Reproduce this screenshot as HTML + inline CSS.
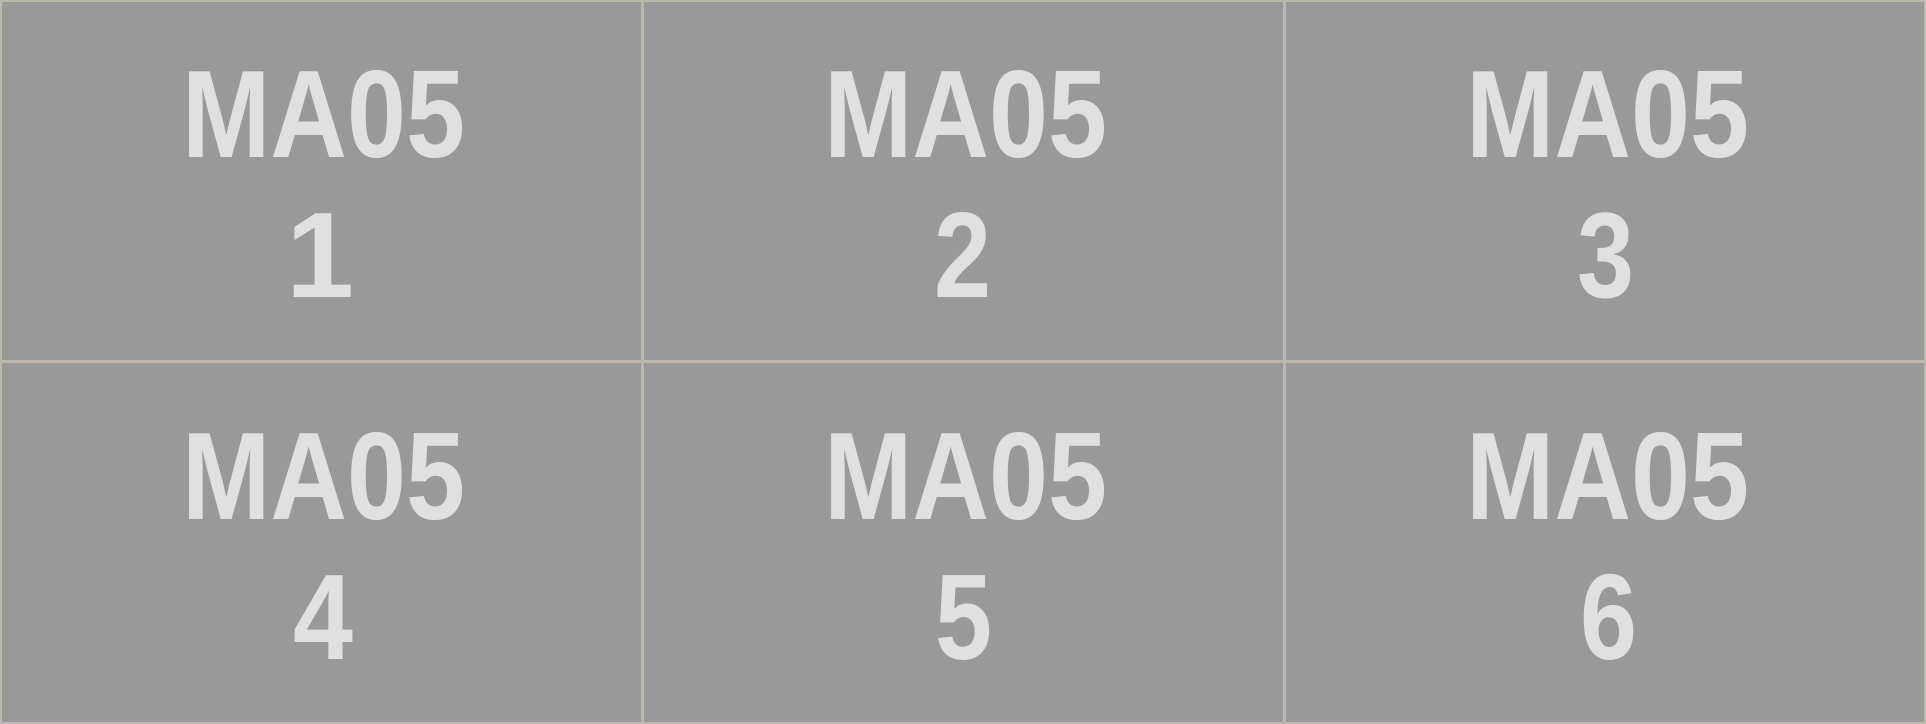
<!DOCTYPE html>
<html><head><meta charset="utf-8"><style>
html,body{margin:0;padding:0;width:1926px;height:724px;overflow:hidden;background:#999;}
svg{position:absolute;left:0;top:0}
text{font-family:"Liberation Sans",sans-serif;font-weight:bold;fill:#e0e0e0;}
</style></head><body>
<svg width="1926" height="724" viewBox="0 0 1926 724">
<rect width="1926" height="724" fill="#999"/>
<g font-size="124">
<text x="182" y="157" textLength="283" lengthAdjust="spacingAndGlyphs">MA05</text>
<text x="824" y="157" textLength="283" lengthAdjust="spacingAndGlyphs">MA05</text>
<text x="1466" y="157" textLength="283" lengthAdjust="spacingAndGlyphs">MA05</text>
<text x="182" y="519" textLength="283" lengthAdjust="spacingAndGlyphs">MA05</text>
<text x="824" y="519" textLength="283" lengthAdjust="spacingAndGlyphs">MA05</text>
<text x="1466" y="519" textLength="283" lengthAdjust="spacingAndGlyphs">MA05</text>
</g>
<g font-size="122" text-anchor="middle">
<text x="320" y="297">1</text>
<text x="934" y="297" text-anchor="start" textLength="57" lengthAdjust="spacingAndGlyphs">2</text>
<text x="1577" y="297" text-anchor="start" textLength="57" lengthAdjust="spacingAndGlyphs">3</text>
<text x="293" y="659" text-anchor="start" textLength="60" lengthAdjust="spacingAndGlyphs">4</text>
<text x="935" y="659" text-anchor="start" textLength="57" lengthAdjust="spacingAndGlyphs">5</text>
<text x="1580" y="659" text-anchor="start" textLength="57" lengthAdjust="spacingAndGlyphs">6</text>
</g>
<g fill="#bcb8ad">
<rect x="641" y="0" width="3" height="724"/>
<rect x="1283" y="0" width="3" height="724"/>
<rect x="0" y="360" width="1926" height="3"/>
<rect x="0" y="0" width="2" height="724"/>
<rect x="1924" y="0" width="2" height="724"/>
<rect x="0" y="0" width="1926" height="2"/>
<rect x="0" y="722" width="1926" height="2"/>
</g>
</svg>
</body></html>
